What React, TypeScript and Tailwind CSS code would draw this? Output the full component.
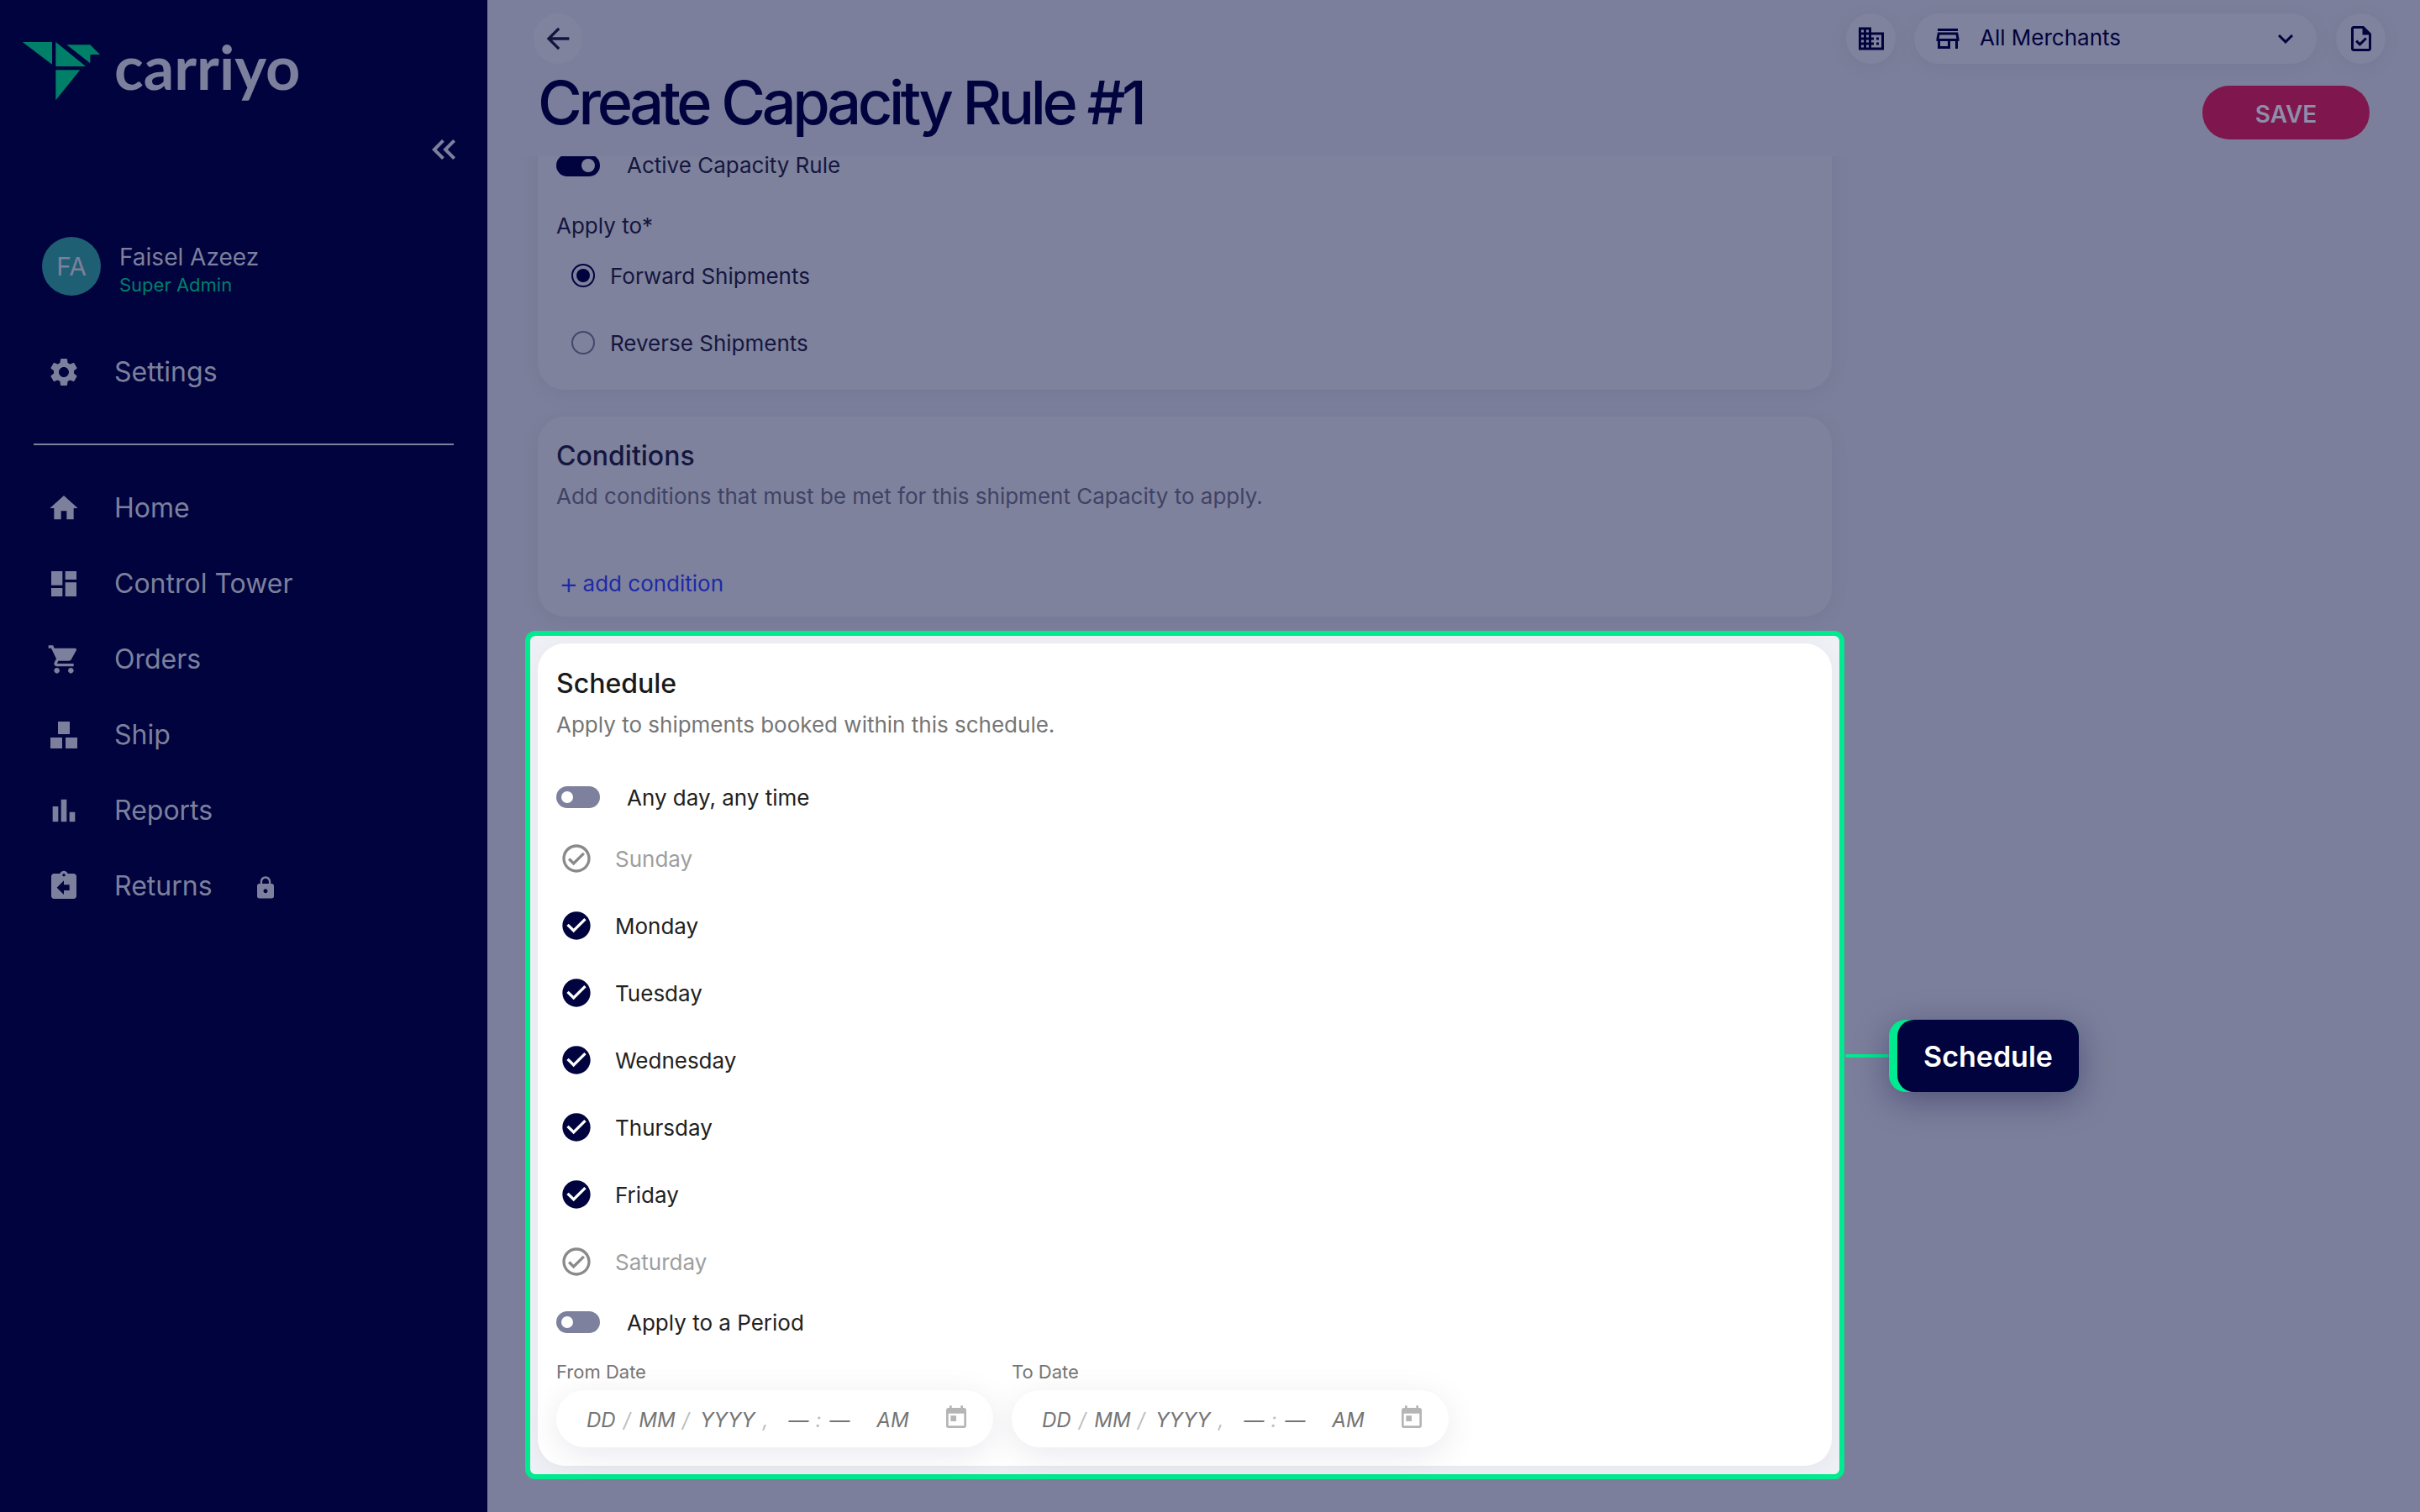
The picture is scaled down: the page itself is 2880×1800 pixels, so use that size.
import {
  MdArrowBack,
  MdAssignmentReturn,
  MdBarChart,
  MdCheckCircle,
  MdDashboard,
  MdDomain,
  MdExpandMore,
  MdHome,
  MdKeyboardDoubleArrowLeft,
  MdLock,
  MdOutlineCheckCircle,
  MdOutlineStore,
  MdOutlineTask,
  MdSettings,
  MdShoppingCart,
  MdToday,
} from 'react-icons/md';

const ShipIcon = () => (
  <svg width={40} height={40} viewBox="0 0 40 40" fill="currentColor">
    <rect x="13" y="4" width="14" height="15" />
    <rect x="4" y="23" width="14" height="13" />
    <rect x="22" y="23" width="14" height="13" />
  </svg>
);

const navItems = [
  { label: 'Home', icon: <MdHome size={40} /> },
  { label: 'Control Tower', icon: <MdDashboard size={40} /> },
  { label: 'Orders', icon: <MdShoppingCart size={40} /> },
  { label: 'Ship', icon: <ShipIcon /> },
  { label: 'Reports', icon: <MdBarChart size={40} /> },
  { label: 'Returns', icon: <MdAssignmentReturn size={40} />, locked: true },
];

const days = [
  { label: 'Sunday', on: false },
  { label: 'Monday', on: true },
  { label: 'Tuesday', on: true },
  { label: 'Wednesday', on: true },
  { label: 'Thursday', on: true },
  { label: 'Friday', on: true },
  { label: 'Saturday', on: false },
];

const Sidebar = () => (
  <aside className="w-[580px] h-[1800px] shrink-0 bg-[#00033d] text-[#7d809c] flex flex-col">
    {/* Logo */}
    <div className="flex items-start pl-[26px] pt-[50px] h-[115px]">
      <svg width={96} height={70} viewBox="26 50 96 70">
        <g fill="#007f69">
          <polygon points="26.7,50 62,50 62,76.7" />
          <polygon points="66.3,50 102,79 66.3,79" />
          <polygon points="79.3,53.3 107.3,53.3 119,65 107.3,65 107.3,75.3" />
          <polygon points="66.3,83.3 95.3,83.3 66.3,119.3" />
        </g>
      </svg>
      <span className="ml-[14px] mt-[-11px] text-[72px] leading-[80px] font-bold [font-family:Lato,sans-serif]">carriyo</span>
    </div>
    <div className="flex justify-end pr-[28px] pt-[39px] h-[167px] text-[#7d809c]">
      <MdKeyboardDoubleArrowLeft size={48} />
    </div>
    {/* User */}
    <div className="flex items-center pl-[50px] h-[70px]">
      <div className="w-[70px] h-[70px] rounded-full bg-[#1f5f73] flex items-center justify-center text-[30px]">FA</div>
      <div className="ml-[22px] pt-[5px]">
        <div className="text-[28px] leading-[38px]">Faisel Azeez</div>
        <div className="text-[22px] leading-[28px] text-[#007f69]">Super Admin</div>
      </div>
    </div>
    <div className="mt-[46px] flex items-center h-[90px] pl-[56px] gap-[40px] text-[32px]">
      <MdSettings size={40} />
      <span>Settings</span>
    </div>
    <div className="mx-[40px] mt-[40px] h-[2px] bg-[#7d809c]" />
    <nav className="mt-[30px] flex flex-col">
      {navItems.map((item) => (
        <div key={item.label} className="flex items-center h-[90px] pl-[56px] gap-[40px] text-[32px]">
          {item.icon}
          <span>{item.label}</span>
          {item.locked && <MdLock size={30} className="ml-[8px] mt-[4px]" />}
        </div>
      ))}
    </nav>
  </aside>
);

const Toggle = ({ on = false }: { on?: boolean }) => (
  <div
    className={
      on
        ? 'w-[52px] h-[26px] rounded-full bg-[#00033d] flex items-center justify-end pr-[6px]'
        : 'w-[52px] h-[26px] rounded-full bg-[#7e819d] flex items-center pl-[6px]'
    }
  >
    <div className={on ? 'w-[16px] h-[16px] rounded-full bg-[#7f829c]' : 'w-[14px] h-[14px] rounded-full bg-white'} />
  </div>
);

const DateField = ({ label }: { label: string }) => (
  <div className="w-[520px]">
    <div className="text-[22px] leading-[30px] text-[#757575]">{label}</div>
    <div className="mt-[7px] h-[68px] rounded-full bg-white shadow-[0_8px_40px_rgba(0,3,61,0.09)] flex items-center pl-[36px] pt-[4px] text-[24px] italic text-[#757575]">
      <span>DD</span>
      <span className="ml-[9px] text-[#bdbdbd]">/</span>
      <span className="ml-[10px]">MM</span>
      <span className="ml-[8px] text-[#bdbdbd]">/</span>
      <span className="ml-[13px]">YYYY</span>
      <span className="ml-[9px] text-[#bdbdbd]">,</span>
      <span className="ml-[24px]">—</span>
      <span className="ml-[8px] text-[#bdbdbd]">:</span>
      <span className="ml-[10px]">—</span>
      <span className="ml-[32px]">AM</span>
      <MdToday size={32} className="ml-[40px] mb-[6px] text-[#b5b5b5]" />
    </div>
  </div>
);

const TopBar = () => (
  <header className="h-[186px] flex justify-between pl-[55px] pr-[41px] pt-[16px]">
    <div>
      <button className="w-[58px] h-[60px] rounded-full bg-[#80839d] flex items-center justify-center text-[#12143f]">
        <MdArrowBack size={40} />
      </button>
      <h1 className="ml-[5px] mt-[6px] text-[72px] leading-[80px] font-medium tracking-[-0.06em] text-[#00033d]">Create Capacity Rule #1</h1>
    </div>
    <div className="flex flex-col items-end">
      <div className="flex items-center text-[#00033d]">
        <div className="w-[59px] h-[60px] rounded-full bg-[#80839d] shadow-[0_4px_24px_rgba(0,3,61,0.05)] flex items-center justify-center">
          <MdDomain size={36} />
        </div>
        <div className="ml-[22px] w-[479px] h-[60px] rounded-full bg-[#80839d] shadow-[0_4px_24px_rgba(0,3,61,0.05)] flex items-center pl-[22px] pr-[19px]">
          <MdOutlineStore size={36} />
          <span className="ml-[20px] mb-[3px] text-[26px]">All Merchants</span>
          <MdExpandMore size={36} className="ml-auto" />
        </div>
        <div className="ml-[23px] w-[59px] h-[60px] rounded-full bg-[#80839d] shadow-[0_4px_24px_rgba(0,3,61,0.05)] flex items-center justify-center">
          <MdOutlineTask size={36} />
        </div>
      </div>
      <button className="mt-[26px] mr-[19px] w-[199px] h-[64px] pt-[3px] rounded-full bg-[#7f174e] text-[#8d8ea8] text-[28px] font-semibold">SAVE</button>
    </div>
  </header>
);

export default function App() {
  return (
    <div className="flex w-[2880px] h-[1800px] overflow-hidden [font-family:Inter,sans-serif]">
      <Sidebar />
      <main className="flex-1 bg-[#7c7f9b] flex flex-col">
        <TopBar />
        <div className="relative flex-1 overflow-hidden pl-[60px]">
          <div className="w-[1540px] flex flex-col gap-[32px] -mt-[39px]">
            {/* General */}
            <section className="rounded-[32px] bg-[#7f829c] shadow-[0_4px_24px_rgba(0,3,61,0.06)] pl-[22px] pt-[37px] pb-[16px] text-[26px] text-[#14163f]">
              <div className="flex items-center h-[26px]">
                <Toggle on />
                <span className="ml-[32px] leading-[22px]">Active Capacity Rule</span>
              </div>
              <div className="mt-[39px] leading-[40px]">Apply to*</div>
              <div className="-mt-[1px] flex items-center h-[80px] pl-[18px]">
                <div className="w-[28px] h-[28px] rounded-full border-[2px] border-[#00033d] flex items-center justify-center">
                  <div className="w-[16px] h-[16px] rounded-full bg-[#00033d]" />
                </div>
                <span className="ml-[18px]">Forward Shipments</span>
              </div>
              <div className="flex items-center h-[80px] pl-[18px]">
                <div className="w-[28px] h-[28px] rounded-full border-[2px] border-[#44466c]" />
                <span className="ml-[18px]">Reverse Shipments</span>
              </div>
            </section>

            {/* Conditions */}
            <section className="rounded-[32px] bg-[#7f829c] shadow-[0_4px_24px_rgba(0,3,61,0.06)] pl-[22px] pt-[27px] pb-[20px]">
              <h2 className="text-[32px] leading-[40px] font-medium text-[#14163f]">Conditions</h2>
              <p className="mt-[10px] text-[26px] leading-[36px] text-[#3f4265]">Add conditions that must be met for this shipment Capacity to apply.</p>
              <div className="mt-[65px] flex items-center h-[40px] pl-[3px] text-[26px] text-[#1c2aa8]">
                <span className="text-[36px] leading-[40px] font-light">+</span>
                <span className="ml-[5px]">add condition</span>
              </div>
            </section>

            {/* Schedule */}
            <div className="relative -m-[15px] mb-0 rounded-[12px] border-[6px] border-[#00ea90] bg-[#eef0f5] pl-[9px] pr-[9px] pt-[9px] pb-[10px]">
              <section className="rounded-[32px] bg-white pl-[22px] pt-[28px] pb-[22px] shadow-[0_4px_24px_rgba(0,3,61,0.04)]">
                <h2 className="text-[32px] leading-[40px] font-medium text-[#1a1a1a]">Schedule</h2>
                <p className="mt-[11px] text-[26px] leading-[36px] text-[#757575]">Apply to shipments booked within this schedule.</p>
                <div className="mt-[55px] flex items-center h-[26px]">
                  <Toggle />
                  <span className="ml-[32px] text-[26px] text-[#212121]">Any day, any time</span>
                </div>
                <div className="mt-[20px] flex flex-col">
                  {days.map((d) => (
                    <div key={d.label} className="flex items-center h-[80px] pl-[4px]">
                      {d.on ? <MdCheckCircle size={40} className="text-[#00033d]" /> : <MdOutlineCheckCircle size={40} className="text-[#8a8a8a]" />}
                      <span className={d.on ? 'ml-[26px] text-[26px] text-[#212121]' : 'ml-[26px] text-[26px] text-[#9e9e9e]'}>{d.label}</span>
                    </div>
                  ))}
                </div>
                <div className="mt-[19px] flex items-center h-[26px]">
                  <Toggle />
                  <span className="ml-[32px] text-[26px] text-[#212121]">Apply to a Period</span>
                </div>
                <div className="mt-[31px] flex gap-[22px]">
                  <DateField label="From Date" />
                  <DateField label="To Date" />
                </div>
              </section>
              {/* Callout */}
              <div className="absolute left-[1565px] top-[457px] flex items-center">
                <div className="w-[52px] h-[4px] rounded-full bg-[#00ea90]" />
                <div className="w-[226px] h-[86px] rounded-[20px] bg-[#00ea90] shadow-[0_10px_40px_rgba(0,3,61,0.35)]">
                  <div className="ml-[10px] h-full rounded-[20px] bg-[#00033d] flex items-center justify-center text-[34px] font-semibold text-white">Schedule</div>
                </div>
              </div>
            </div>
          </div>
        </div>
      </main>
    </div>
  );
}
